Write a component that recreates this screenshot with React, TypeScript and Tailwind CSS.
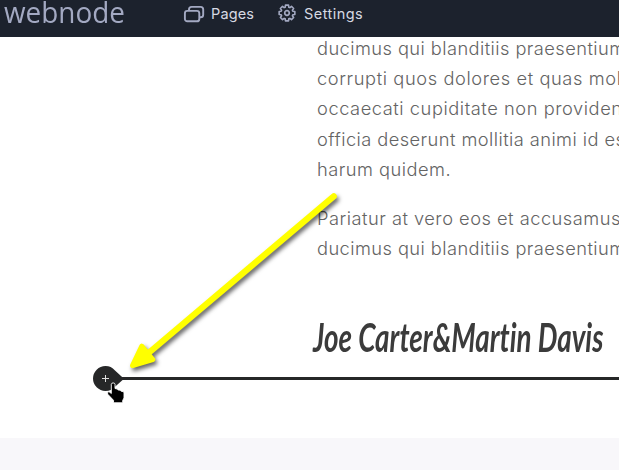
const firstParagraph = [
  { text: "ducimus qui blanditiis praesentium", tracking: "tracking-[0.44px]" },
  { text: "corrupti quos dolores et quas mol", tracking: "tracking-[0.6px]" },
  { text: "occaecati cupiditate non provident", tracking: "tracking-[0.56px]" },
  { text: "officia deserunt mollitia animi id est", tracking: "tracking-[0.44px]" },
  { text: "harum quidem.", tracking: "tracking-[0.48px]" },
];

const secondParagraph = [
  { text: "Pariatur at vero eos et accusamus", tracking: "tracking-[0.5px]" },
  { text: "ducimus qui blanditiis praesentium", tracking: "tracking-[0.44px]" },
];

const gearOutline =
  Array.from({ length: 8 }, (_, tooth) =>
    [[-17, 6.1], [-11, 8], [11, 8], [17, 6.1]].map(([offset, radius]) => {
      const angle = ((tooth * 45 + offset) * Math.PI) / 180;
      return `${(radius * Math.cos(angle)).toFixed(2)} ${(radius * Math.sin(angle)).toFixed(2)}`;
    }),
  )
    .flat()
    .map((point, i) => (i === 0 ? "M" : "L") + point)
    .join("") + "Z";

function PagesIcon() {
  return (
    <svg className="h-[20px] w-[22px]" viewBox="0 0 22 20" fill="none" stroke="#a3a9c2" strokeWidth="1.9">
      <rect x="1.9" y="6.9" width="14.4" height="10.4" rx="2.4" />
      <path d="M6 6.6V5.5a2.6 2.6 0 0 1 2.6-2.6h9a2.6 2.6 0 0 1 2.6 2.6v5.2a2.6 2.6 0 0 1-2.6 2.6h-1" />
    </svg>
  );
}

function GearIcon() {
  return (
    <svg className="-mt-[2px] h-[20px] w-[20px]" viewBox="-10 -10 20 20" fill="none" stroke="#a3a9c2" strokeLinejoin="round">
      <path d={gearOutline} strokeWidth="1.6" />
      <circle r="2.3" strokeWidth="1.7" />
    </svg>
  );
}

function TopBar() {
  return (
    <header className="flex h-[37px] bg-[#1c222d] font-['Inter',sans-serif]">
      <div className="w-[183px] shrink-0 pl-[4px]">
        <span className="block w-max origin-left scale-x-[0.93] whitespace-nowrap font-['Open_Sans',sans-serif] text-[30px] leading-[24px] text-[#a3a9c2]">webnode</span>
      </div>
      <nav className="flex h-[28px] items-center text-[14.5px] text-[#d6d9e2]">
        <div className="flex w-[94px] items-center gap-[6px] tracking-[0.15px]"><PagesIcon /><span>Pages</span></div>
        <div className="flex items-center gap-[7px] tracking-[0.45px]"><GearIcon /><span>Settings</span></div>
      </nav>
    </header>
  );
}

function Lines({ lines }: { lines: typeof firstParagraph }) {
  return (
    <p className="mb-[18px] whitespace-nowrap">
      {lines.map((line) => (
        <span key={line.text} className={"block h-[30.4px] " + line.tracking}>{line.text}</span>
      ))}
    </p>
  );
}

function Arrow() {
  return (
    <svg className="pointer-events-none absolute left-[120px] top-[180px] h-[200px] w-[230px] drop-shadow-[2px_3px_2px_rgba(0,0,0,0.6)]" viewBox="120 180 230 200">
      <path d="M333.7 196.3 145 356" stroke="#ff0" strokeWidth="6.2" strokeLinecap="round" />
      <path d="M132.5 365.5 141.8 346.2 152.8 359.5Z" fill="#ff0" stroke="#ff0" strokeWidth="5" strokeLinejoin="round" />
    </svg>
  );
}

function HandCursor() {
  return (
    <svg className="absolute left-[13px] top-[16px] h-[24px] w-[20px]" viewBox="0 0 20 24">
      <path d="M5.3 2.2C5.3.5 9 .5 9 2.2v4.3l2.6.6.3.8 2.6.3.4.9 2.6.7.5 1v5.2l-1.3 2.4v2.4H7.5v-2.5l-5.7-6c-1.1-2 .6-3.3 2.1-2l1.4 1.2Z" fill="#000" stroke="#fff" strokeWidth="0.9" />
    </svg>
  );
}

export default function App() {
  return (
    <div className="relative flex h-[470px] w-full flex-col overflow-hidden bg-white">
      <TopBar />
      <main className="h-[329px] overflow-hidden pl-[317px]">
        <div className="-mt-[4.4px] h-[283.9px] font-['Inter',sans-serif] text-[18.25px] font-light leading-[30.4px] text-[#646464]">
          <Lines lines={firstParagraph} />
          <Lines lines={secondParagraph} />
        </div>
        <h2 className="-ml-[4px] -mt-[1.5px] w-max origin-left scale-x-[0.695] whitespace-nowrap font-['Lato',sans-serif] text-[40px] font-bold italic leading-[44px] text-[#3b3b3b] [font-variant-ligatures:none]">Joe Carter&amp;Martin Davis</h2>
      </main>
      <div className="relative flex h-[72px] shrink-0 pl-[93px]">
        <div className="relative h-[26px] w-[31px] shrink-0">
          <svg className="h-[26px] w-[31px]" viewBox="0 0 31 26">
            <path d="M12.5 0a12.5 12.5 0 1 0 0 25c4 0 6.8-1.4 9.5-4.2L31 12.7 22 4.4C19.3 1.5 16.4 0 12.5 0Z" fill="#262728" />
            <path d="M9 12.5h7M12.5 9v7" stroke="#ddd" strokeWidth="1" />
          </svg>
          <HandCursor />
        </div>
        <div className="-ml-[2px] mt-[11px] h-[3px] flex-1 bg-[#262728]" />
      </div>
      <footer className="h-[32px] shrink-0 bg-[#f8f7fa]" />
      <Arrow />
    </div>
  );
}
